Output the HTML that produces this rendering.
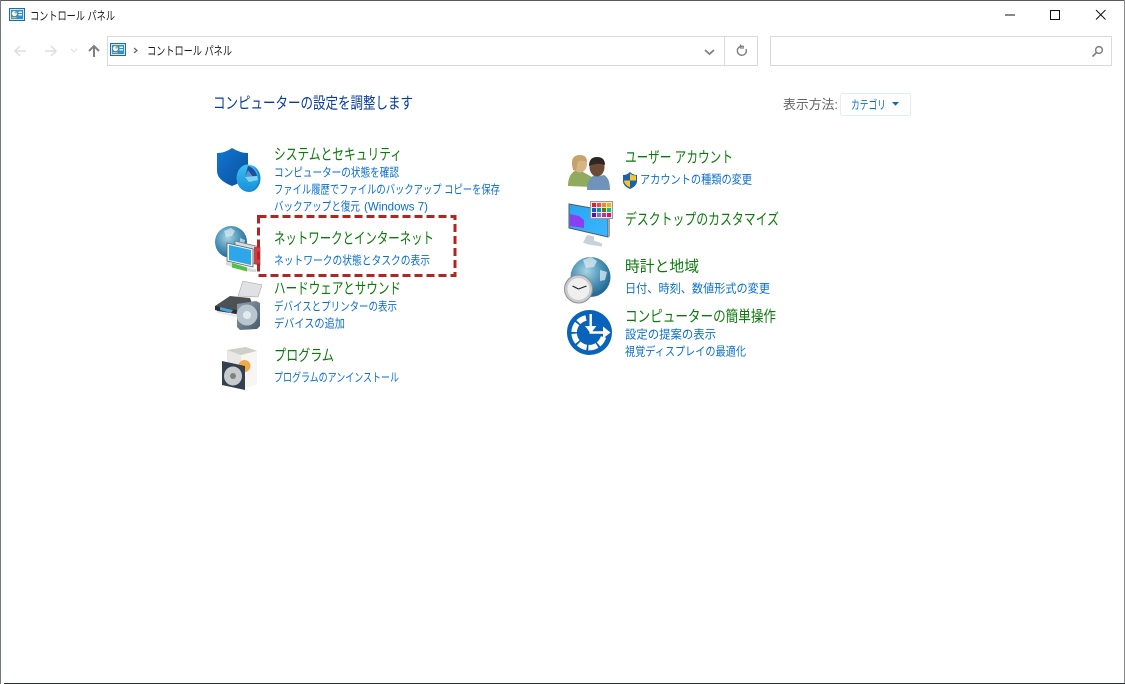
<!DOCTYPE html>
<html lang="ja"><head><meta charset="utf-8"><title>コントロール パネル</title>
<style>
html,body{margin:0;padding:0;background:#fff;width:1125px;height:684px;overflow:hidden}
svg{display:block}
text{font-family:"Liberation Sans","Noto Sans CJK JP",sans-serif}
.h{font-size:15.5px;fill:#0b7a0b}
.l{font-size:12px;fill:#0a6ed0}
.t{font-size:12px;fill:#1a1a1a}
</style></head><body>
<svg width="1125" height="684" viewBox="0 0 1125 684" xmlns="http://www.w3.org/2000/svg">
<defs>
<linearGradient id="sh" x1="0" y1="0" x2="1" y2="1"><stop offset="0" stop-color="#1277d0"/><stop offset="1" stop-color="#0a4f9e"/></linearGradient>
<linearGradient id="sc" x1="0" y1="0" x2="0" y2="1"><stop offset="0" stop-color="#3cc0f2"/><stop offset="1" stop-color="#1790d8"/></linearGradient>
<radialGradient id="gl" cx=".4" cy=".35" r=".7"><stop offset="0" stop-color="#a8d4e4"/><stop offset=".55" stop-color="#4b93b8"/><stop offset="1" stop-color="#1c5f8c"/></radialGradient>
<linearGradient id="grey" x1="0" y1="0" x2="1" y2="1"><stop offset="0" stop-color="#8fa0b0"/><stop offset="1" stop-color="#47586a"/></linearGradient>
<linearGradient id="mon" x1="0" y1="0" x2="1" y2="1"><stop offset="0" stop-color="#2aa4f2"/><stop offset="1" stop-color="#38b8ff"/></linearGradient>
<g id="cp"><rect x=".5" y=".5" width="15" height="12" fill="#cfe6f6" stroke="#1b6ea8"/><rect x="2" y="2" width="12" height="9" fill="#2f8fd0"/><circle cx="5.500" cy="5.500" r="2.600" fill="#f2f7fb"/><path d="M5.500 5.500V3a2.500 2.500 0 0 1 2.500 2.500z" fill="#e8a52c"/><rect x="9.500" y="3.500" width="3.500" height="1.500" fill="#eef6fb"/><rect x="9.500" y="6" width="3.500" height="1.500" fill="#eef6fb"/><rect x="2.500" y="9" width="5" height="1.200" fill="#f1b53a"/></g>
</defs>
<rect width="1125" height="684" fill="#fff"/>
<!-- window edges -->
<rect x="0" y="0" width="1125" height="1" fill="#5a5a5a"/>
<rect x="0" y="0" width="1" height="684" fill="#6f7a7c"/>
<rect x="1124" y="0" width="1" height="684" fill="#8a8a8a"/>
<rect x="4" y="683" width="1121" height="1" fill="#2a3036"/>

<!-- title bar -->
<use href="#cp" x="9" y="8"/>
<text class="t" x="30" y="20" textLength="85" lengthAdjust="spacingAndGlyphs">コントロール パネル</text>
<path d="M1005 15h10" stroke="#111" stroke-width="1"/>
<rect x="1050.500" y="10.500" width="9" height="9" fill="none" stroke="#111"/>
<path d="M1096 10l9.500 9.500M1105.500 10L1096 19.500" stroke="#111" stroke-width="1" fill="none"/>

<!-- nav -->
<g fill="none" stroke-width="1.500">
<path d="M26 51H15M20 46l-5 5 5 5" stroke="#dedede"/>
<path d="M45 51h11M51 46l5 5-5 5" stroke="#dedede"/>
<path d="M71 49l3 3 3-3" stroke="#dedede" stroke-width="1"/>
<path d="M94 57V46M89 51l5-5 5 5" stroke="#7f7f7f" stroke-width="2"/>
</g>
<rect x="107.500" y="36.500" width="650" height="29" fill="#fff" stroke="#d9d9d9"/>
<path d="M724.500 37v28" stroke="#d9d9d9"/>
<use href="#cp" x="110" y="43"/>
<path d="M134 48l3 2.500-3 2.500" fill="none" stroke="#6a6a6a" stroke-width="1.300"/>
<text class="t" x="147" y="55" textLength="85" lengthAdjust="spacingAndGlyphs">コントロール パネル</text>
<path d="M705 50l4.500 4 4.500-4" fill="none" stroke="#808080" stroke-width="1.800"/>
<path d="M746 49a4.500 4.500 0 1 1-2-2.200" fill="none" stroke="#808080" stroke-width="1.400"/><path d="M740.500 44.500v3.500h3.500" fill="none" stroke="#808080" stroke-width="1.200"/>
<rect x="770.500" y="36.500" width="341" height="29" fill="#fff" stroke="#d9d9d9"/>
<circle cx="1099" cy="50" r="3.400" fill="none" stroke="#808080" stroke-width="1.500"/><path d="M1096.500 52.500l-4 4" stroke="#808080" stroke-width="1.800"/>

<!-- header -->
<text x="213" y="108.500" font-size="16" fill="#0a3c9c" textLength="200" lengthAdjust="spacingAndGlyphs">コンピューターの設定を調整します</text>
<text x="783" y="109" font-size="13" fill="#666" textLength="55" lengthAdjust="spacingAndGlyphs">表示方法:</text>
<rect x="840.500" y="93.500" width="70" height="22" rx="2" fill="#fff" stroke="#e6ebf0"/>
<text class="l" x="851" y="109" textLength="35" lengthAdjust="spacingAndGlyphs">カテゴリ</text>
<path d="M892 102h7l-3.500 3.800z" fill="#0a66cc"/>

<!-- left column text -->
<text class="h" x="274" y="159.500" textLength="128" lengthAdjust="spacingAndGlyphs">システムとセキュリティ</text>
<text class="l" x="274" y="176.500" textLength="125" lengthAdjust="spacingAndGlyphs">コンピューターの状態を確認</text>
<text class="l" x="274" y="193.500" textLength="226" lengthAdjust="spacingAndGlyphs">ファイル履歴でファイルのバックアップ コピーを保存</text>
<text class="l" x="274" y="210.500" textLength="86" lengthAdjust="spacingAndGlyphs">バックアップと復元</text>
<text class="l" x="364" y="210.500" textLength="64" lengthAdjust="spacingAndGlyphs">(Windows 7)</text>
<text class="h" x="274" y="243.500" textLength="160" lengthAdjust="spacingAndGlyphs">ネットワークとインターネット</text>
<text class="l" x="274" y="264.500" textLength="156" lengthAdjust="spacingAndGlyphs">ネットワークの状態とタスクの表示</text>
<text class="h" x="274" y="293.500" textLength="127" lengthAdjust="spacingAndGlyphs">ハードウェアとサウンド</text>
<text class="l" x="274" y="310.500" textLength="123" lengthAdjust="spacingAndGlyphs">デバイスとプリンターの表示</text>
<text class="l" x="274" y="327.500" textLength="71" lengthAdjust="spacingAndGlyphs">デバイスの追加</text>
<text class="h" x="274" y="360.500" textLength="60" lengthAdjust="spacingAndGlyphs">プログラム</text>
<text class="l" x="274" y="381.500" textLength="125" lengthAdjust="spacingAndGlyphs">プログラムのアンインストール</text>

<!-- right column text -->
<text class="h" x="625" y="162.500" textLength="108" lengthAdjust="spacingAndGlyphs">ユーザー アカウント</text>
<text class="l" x="640" y="183.500" textLength="112" lengthAdjust="spacingAndGlyphs">アカウントの種類の変更</text>
<text class="h" x="625" y="224.500" textLength="154" lengthAdjust="spacingAndGlyphs">デスクトップのカスタマイズ</text>
<text class="h" x="625" y="271.500" textLength="74" lengthAdjust="spacingAndGlyphs">時計と地域</text>
<text class="l" x="625" y="292.500" textLength="145" lengthAdjust="spacingAndGlyphs">日付、時刻、数値形式の変更</text>
<text class="h" x="625" y="321.500" textLength="151" lengthAdjust="spacingAndGlyphs">コンピューターの簡単操作</text>
<text class="l" x="625" y="338.500" textLength="91" lengthAdjust="spacingAndGlyphs">設定の提案の表示</text>
<text class="l" x="625" y="355.500" textLength="121" lengthAdjust="spacingAndGlyphs">視覚ディスプレイの最適化</text>

<!-- security icon -->
<path d="M217 153q8 0 15-5 8 5 16 5v18q0 9-16 15-15-6-15-15z" fill="url(#sh)"/>
<ellipse cx="249" cy="178.500" rx="11.500" ry="13.500" fill="#1487cf"/>
<ellipse cx="247.500" cy="178" rx="11" ry="13.500" fill="url(#sc)"/>
<path d="M248 166q7 2 9 10l-12 1z" fill="#1d4f9c"/>
<path d="M248 170l-3 7 8 0z" fill="#5d93d6"/>
<path d="M245 177l12-1 1 4-9 2z" fill="#7fd4f5"/>

<!-- network icon -->
<circle cx="231" cy="242" r="16" fill="url(#gl)"/>
<path d="M224 231l7-3 4 3-3 5-6 1zM240 238l5 2-1 5-4 1z" fill="#dcebf1" opacity=".7"/>
<path d="M235 241l25 6v18l-25-5z" fill="#d8dde0" stroke="#6a7a84" stroke-width=".8"/>
<path d="M254 247h6v17h-6z" fill="#c92d3a" opacity=".9"/>
<path d="M227 243l26 6v18l-26-6z" fill="#f0f3f5" stroke="#58656e" stroke-width=".8"/>
<path d="M229 245l22 5v15l-22-5z" fill="#2ea6ea"/>
<path d="M226 262l4 0 23 7h3v3h-5l-25-7z" fill="#d9dcdc"/>
<path d="M232 263l15 4.500v4l-15-4z" fill="#53c043"/>

<!-- printer/hardware icon -->
<path d="M243 281l19 4-4 12-20-1z" fill="#dfe1e2" stroke="#a8a8a8" stroke-width=".6"/>
<path d="M215 306l15-10 20 2 2 5-9 12-26-4z" fill="#4d5156"/>
<path d="M215 306l26 5v4l-26-5z" fill="#2c2f33"/>
<path d="M220 307l13 3-2 3-11-3z" fill="#49a5dc"/>
<path d="M217 311l19 4v2l-19-4z" fill="#e8e8e8"/>
<path d="M237 304l19-3 4 2v23l-3 3-17 1-3-3z" fill="url(#grey)"/>
<circle cx="247" cy="315" r="10.500" fill="#b8c6d0"/><circle cx="247" cy="315" r="4" fill="#e4ebef"/>

<!-- program icon -->
<path d="M227 350l19-3 11 4v33l-15 5-15-5z" fill="#e8e8e6"/>
<path d="M227 350l19-3 11 4-16 4z" fill="#cfcfca"/>
<path d="M241 355l16-4v33l-16 5z" fill="#f7f6f2"/>
<circle cx="244.500" cy="366" r="6" fill="#f0a848"/>
<path d="M222 361l23 5v24l-23-5z" fill="#33414e"/>
<ellipse cx="233" cy="376" rx="9" ry="9.500" fill="#c7cbcd"/><circle cx="233" cy="376" r="3" fill="#7b8285"/>

<!-- users icon -->
<path d="M568 186q0-13 9-16l6 2 9 5v10z" fill="#90ab5d"/>
<ellipse cx="580" cy="164" rx="7" ry="8.500" fill="#d8b384"/>
<path d="M572 165q-1-10 8-10 7 0 7 7-5-2-9-1l-2 10-3-1z" fill="#c4a468"/>
<path d="M587 190q0-12 8-15l4 1 5-1q6 3 6 15z" fill="#6f93ba"/>
<ellipse cx="597" cy="167" rx="7.500" ry="9.500" fill="#6b4a36"/>
<path d="M589 166q0-9 8-9 8 0 8 8-7-3-16 1z" fill="#2e2622"/>

<!-- UAC shield -->
<path d="M623 175q4 0 7-3 3 3 7 3v6q0 5-7 8-7-3-7-8z" fill="#1a62ad"/>
<path d="M630 173.500v7h6v-5q-4 0-6-2zM630 180.500h-6q0 4 6 7z" fill="#f6c52b"/>

<!-- desktop icon -->
<path d="M569 204l39 7v26l-39-9z" fill="url(#mon)" stroke="#55595c" stroke-width="1"/>
<path d="M570 214l9 2 5 4v8l-14-2z" fill="#8c3ff0"/>
<path d="M608 211v26l2-.5v-25z" fill="#a2a5a7"/>
<path d="M587 235l7 1.500v4l8 3v3l-14-2-5-2z" fill="#c9d2d8"/>
<rect x="590.500" y="201.500" width="22" height="17" fill="#e6e6e6" stroke="#9a9a9a"/>
<g>
<rect x="592" y="203" width="4" height="4" fill="#e0202a"/><rect x="597" y="203" width="4" height="4" fill="#ef4a50"/><rect x="602" y="203" width="4" height="4" fill="#f08a1c"/><rect x="607" y="203" width="4" height="4" fill="#f5b400"/>
<rect x="592" y="208" width="4" height="4" fill="#1060c0"/><rect x="597" y="208" width="4" height="4" fill="#0a8ac8"/><rect x="602" y="208" width="4" height="4" fill="#5a7a10"/><rect x="607" y="208" width="4" height="4" fill="#10c070"/>
<rect x="592" y="213" width="4" height="4" fill="#5010c0"/><rect x="597" y="213" width="4" height="4" fill="#8a70c8"/><rect x="602" y="213" width="4" height="4" fill="#c03098"/><rect x="607" y="213" width="4" height="4" fill="#e01070"/>
</g>

<!-- clock/region icon -->
<circle cx="590.500" cy="277" r="20" fill="url(#gl)"/>
<path d="M583 260l8-3 6 4-3 6-8 1zM600 270l7 2-2 8-5 1z" fill="#dcebf1" opacity=".75"/>
<circle cx="578.500" cy="289" r="14" fill="#c9cbcd" stroke="#8c8f92"/>
<circle cx="578.500" cy="289" r="11" fill="#efeff0"/>
<path d="M578.500 289l-6-3M578.500 289l8-3" stroke="#222" stroke-width="1.200" fill="none"/>

<!-- ease of access icon -->
<circle cx="589.500" cy="332.500" r="22.500" fill="#0863ba"/>
<path d="M603.500 337A15 15 0 1 1 586 318" fill="none" stroke="#fff" stroke-width="5.500" stroke-dasharray="9 1.800"/>
<path d="M590.700 314v18.500h15" fill="none" stroke="#fff" stroke-width="2.400"/>
<path d="M585 326h11.400l-5.700 7.500zM603 326.500l7.500 6-7.500 6z" fill="#fff"/>

<!-- highlight -->
<rect x="258.500" y="216.500" width="196.500" height="59" fill="none" stroke="#b32520" stroke-width="3" stroke-dasharray="8 4"/>
</svg>
</body></html>
